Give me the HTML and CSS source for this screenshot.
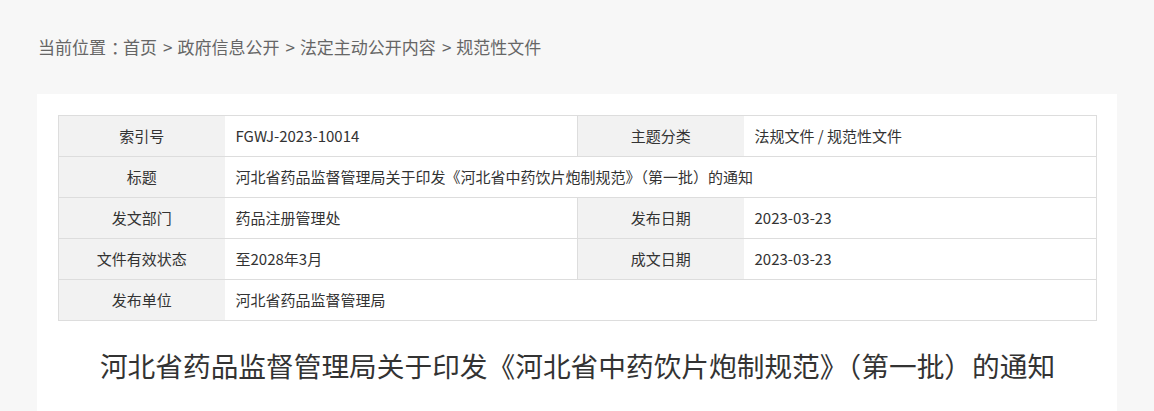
FILE: index.html
```html
<!DOCTYPE html>
<html lang="zh-CN">

<head>
    <meta charset="UTF-8">
    <meta name="viewport" content="width=device-width, initial-scale=1.0">
    <title>规范性文件</title>
    <link rel="stylesheet" href="styles.css">
</head>

<body>

    <div class="wrap">
        <div class="breadcrumb">
            当前位置<span class="colon">：</span><a href="#">首页</a><span class="sep">&gt;</span><a href="#">政府信息公开</a><span class="sep">&gt;</span><a href="#">法定主动公开内容</a><span class="sep">&gt;</span><a href="#">规范性文件</a>
        </div>

        <div class="article">
            <table class="meta-table">
                <colgroup>
                    <col class="col-label">
                    <col class="col-value">
                    <col class="col-label">
                    <col class="col-value">
                </colgroup>
                <tbody>
                    <tr>
                        <th>索引号</th>
                        <td>FGWJ-2023-10014</td>
                        <th>主题分类</th>
                        <td>法规文件 / 规范性文件</td>
                    </tr>
                    <tr>
                        <th>标题</th>
                        <td colspan="3">河北省药品监督管理局关于印发《河北省中药饮片炮制规范》（第一批）的通知</td>
                    </tr>
                    <tr>
                        <th>发文部门</th>
                        <td>药品注册管理处</td>
                        <th>发布日期</th>
                        <td>2023-03-23</td>
                    </tr>
                    <tr>
                        <th>文件有效状态</th>
                        <td>至2028年3月</td>
                        <th>成文日期</th>
                        <td>2023-03-23</td>
                    </tr>
                    <tr>
                        <th>发布单位</th>
                        <td colspan="3">河北省药品监督管理局</td>
                    </tr>
                </tbody>
            </table>

            <h1 class="article-title">河北省药品监督管理局关于印发《河北省中药饮片炮制规范》（第一批）的通知</h1>
        </div>
    </div>

</body>

</html>
```

FILE: styles.css
```css
:root {
    --color-text: #333333;
    --color-text-muted: #666666;
    --color-background: #f7f7f7;
    --color-surface: #ffffff;
    --color-border: #dddddd;
    --color-label-bg: #f2f2f2;
    --font-family: "Noto Sans CJK SC", "Noto Sans", Arial, sans-serif;
}

body {
    margin: 0;
    font-family: var(--font-family);
    background-color: var(--color-background);
    color: var(--color-text);
}

.wrap {
    width: 1080px;
    margin: 0 auto;
}

.breadcrumb {
    padding: 35px 0 0 1px;
    height: 24px;
    line-height: 24px;
    font-size: 17px;
    color: var(--color-text-muted);
    margin-bottom: 35px;
    white-space: nowrap;
}

.breadcrumb a {
    color: var(--color-text-muted);
    text-decoration: none;
}

/* centre the full-width colon like the original font does */
.breadcrumb .colon {
    padding-left: 5px;
    letter-spacing: -5px;
}

.breadcrumb .sep {
    padding: 0 5px 0 6px;
}

.article {
    background: var(--color-surface);
    padding: 21px 20px 30px 21px;
}

.meta-table {
    width: 100%;
    border-collapse: collapse;
    table-layout: fixed;
    font-size: 15px;
}

.col-label {
    width: 166px;
}

.meta-table th,
.meta-table td {
    height: 41px;
    padding: 0 11px;
    line-height: 20px;
    border: 1px solid var(--color-border);
    box-sizing: border-box;
}

.meta-table th {
    background-color: var(--color-label-bg);
    font-weight: normal;
    text-align: center;
    border-right: none;
}

.meta-table td {
    text-align: left;
    border-left: none;
    border-right: none;
}

.meta-table td:last-child {
    border-right: 1px solid var(--color-border);
}

.article-title {
    margin: 24px 0 0;
    font-size: 27.7px;
    line-height: 40px;
    font-weight: normal;
    text-align: center;
    color: var(--color-text);
}
```
